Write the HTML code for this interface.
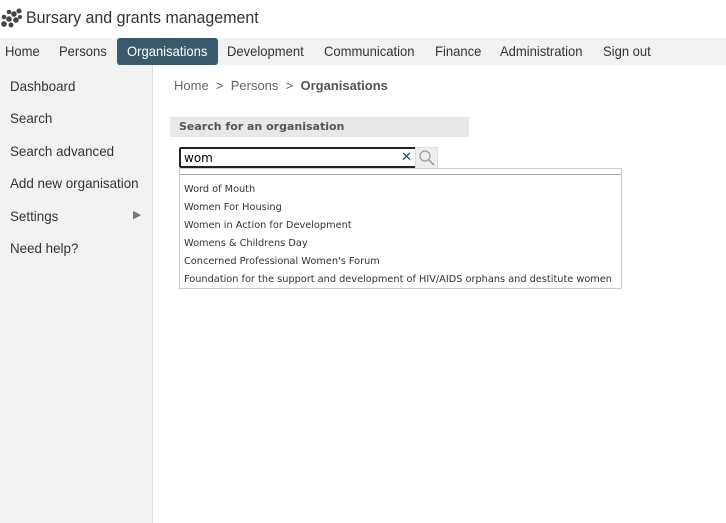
<!DOCTYPE html>
<html><head><style>
body{margin:0;width:726px;height:523px;background:#fff;font-family:"Liberation Sans",sans-serif;position:relative;overflow:hidden}
.logo{position:absolute;left:26px;top:8px;font-size:17px;color:#333;transform:scaleX(.94);transform-origin:0 0;white-space:nowrap}
.nav{position:absolute;left:0;top:38px;width:726px;height:27px;background:#f2f2f2}
.nav span{position:absolute;top:5px;font-size:14px;color:#333;transform:scaleX(.93);transform-origin:0 0;white-space:nowrap}
.nav .act{position:absolute;top:0;left:117px;width:101px;height:27px;background:#3b5a6b;border-radius:3px}
.side{position:absolute;left:0;top:65px;width:152px;height:458px;background:#f2f2f2;border-right:1px solid #ddd}
.side div{position:absolute;left:10px;font-size:14px;color:#333;transform:scaleX(.955);transform-origin:0 0;white-space:nowrap}
.bc{position:absolute;left:174px;top:78px;font-size:13px;color:#666;white-space:nowrap}
.hd{position:absolute;left:170px;top:117px;width:299px;height:20px;background:#e8e8e8;font-family:"DejaVu Sans",sans-serif;font-size:11px;font-weight:bold;color:#555;line-height:20px;padding-left:9px;box-sizing:border-box}
.inp{position:absolute;left:179px;top:147px;width:232px;height:17px;border:2px solid #222;border-radius:2px;font-family:"DejaVu Sans",sans-serif;font-size:12px;line-height:18px;padding-left:3px}
.btn{position:absolute;left:415px;top:147px;width:21px;height:20px;background:#eee;border:1px solid #ddd}
.dd{position:absolute;left:179px;top:168px;width:441px;height:119px;border:1px solid #ccc}
.dd .ln{position:absolute;left:0;top:5px;width:441px;border-top:1px solid #aaa}
.dd div{position:absolute;left:4px;font-family:"DejaVu Sans",sans-serif;font-size:9.75px;color:#333;white-space:nowrap}
</style></head><body>
<svg style="position:absolute;left:0;top:8px" width="22" height="20" viewBox="0 0 22 20"><g fill="#444"><circle cx="4" cy="16" r="2.8"/><circle cx="9" cy="11" r="2.8"/><circle cx="14" cy="6" r="2.8"/><circle cx="19" cy="3" r="2.5"/><circle cx="4" cy="9" r="2.3"/><circle cx="9" cy="4" r="2.3"/><circle cx="11" cy="17" r="2.5"/><circle cx="16" cy="12" r="2.8"/><circle cx="20" cy="9" r="2"/></g></svg>
<div class="logo">Bursary and grants management</div>
<div class="nav"><div class="act"></div><span style="left:5px">Home</span><span style="left:59px">Persons</span><span style="left:127px;color:#fff">Organisations</span><span style="left:227px">Development</span><span style="left:324px">Communication</span><span style="left:435px">Finance</span><span style="left:500px">Administration</span><span style="left:603px">Sign out</span></div>
<div class="side">
<div style="top:13px">Dashboard</div><div style="top:45px">Search</div><div style="top:78px">Search advanced</div><div style="top:110px">Add new organisation</div><div style="top:143px">Settings</div><div style="top:143px;left:133px;font-size:11px;color:#777">▶</div><div style="top:175px">Need help?</div></div>
<div class="bc">Home &nbsp;&gt;&nbsp; Persons &nbsp;&gt;&nbsp; <b style="color:#555">Organisations</b></div>
<div class="hd">Search for an organisation</div>
<div class="inp">wom<span style="position:absolute;right:4px;top:0;color:#2a4a8a;font-weight:bold;font-size:13px">✕</span></div>
<div class="btn"><svg width="21" height="20"><circle cx="9" cy="8" r="5" fill="none" stroke="#999" stroke-width="1.2"/><line x1="12.5" y1="11.5" x2="18" y2="17" stroke="#999" stroke-width="1.5"/></svg></div>
<div class="dd"><span class="ln"></span>
<div style="top:15px">Word of Mouth</div><div style="top:33px">Women For Housing</div><div style="top:51px">Women in Action for Development</div><div style="top:69px">Womens &amp; Childrens Day</div><div style="top:87px">Concerned Professional Women's Forum</div><div style="top:105px">Foundation for the support and development of HIV/AIDS orphans and destitute women</div></div>
</body></html>
